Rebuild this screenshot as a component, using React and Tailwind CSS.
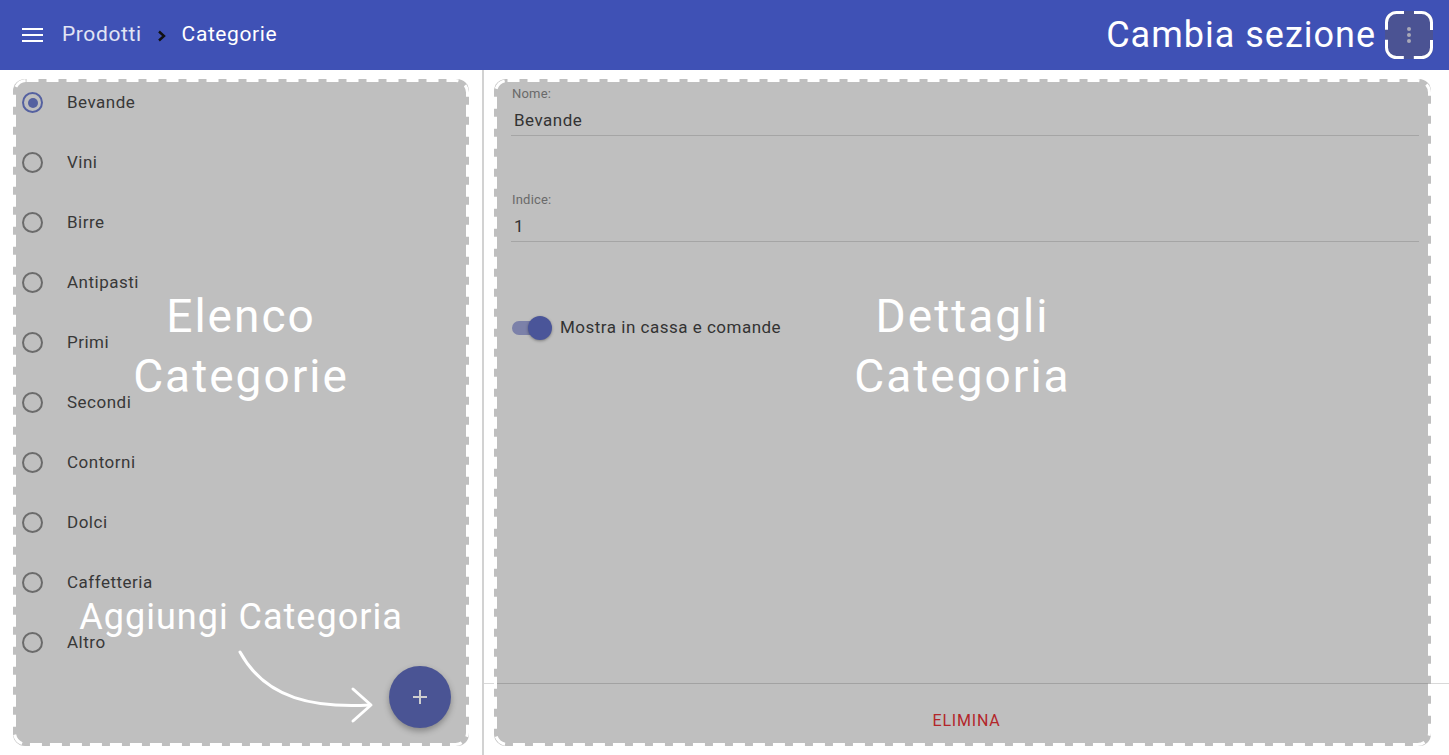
import React from 'react';

const categorie = ['Bevande', 'Vini', 'Birre', 'Antipasti', 'Primi', 'Secondi', 'Contorni', 'Dolci', 'Caffetteria', 'Altro'];

// dashed white outline drawn over the annotated areas
const DashedOutline = ({ radius = 12, dash = '12 8', offset = 0 }) => (
    <svg className="pointer-events-none absolute inset-0 h-full w-full overflow-visible">
        <rect
            x="1.5"
            y="1.5"
            rx={radius}
            ry={radius}
            className="h-[calc(100%-3px)] w-[calc(100%-3px)]"
            fill="none"
            stroke="#fff"
            strokeWidth="3"
            strokeDasharray={dash}
            strokeDashoffset={offset}
        />
    </svg>
);

const Radio = ({ checked }) => (
    <span
        className={
            'flex h-[21px] w-[21px] shrink-0 items-center justify-center rounded-full border-2 ' +
            (checked ? 'border-[#5561a0]' : 'border-[#6b6b6b]')
        }
    >
        {checked && <span className="h-[10px] w-[10px] rounded-full bg-[#5561a0]" />}
    </span>
);

const Header = () => (
    <header className="flex h-[70px] shrink-0 items-center bg-[#3f51b5] pl-[22px] pr-[16px] text-white">
        <svg width="21" height="16" viewBox="0 0 21 16" className="shrink-0">
            <rect x="0" y="1" width="21" height="2" fill="#fff" />
            <rect x="0" y="7" width="21" height="2" fill="#fff" />
            <rect x="0" y="13" width="21" height="2" fill="#fff" />
        </svg>
        <span className="ml-[19px] text-[21px] tracking-[0.6px] text-white/85">Prodotti</span>
        <svg width="10" height="12" viewBox="0 0 10 12" className="ml-[15px] mt-[2px]">
            <path d="M2 1.5 L7 6 L2 10.5" stroke="#111" strokeWidth="2.4" fill="none" />
        </svg>
        <span className="ml-[15px] text-[21px] tracking-[0.6px]">Categorie</span>
        <div className="ml-auto flex items-center">
            <span className="text-[36px] leading-none tracking-[1px]">Cambia sezione</span>
            <button className="relative ml-[9px] flex h-[48px] w-[48px] flex-col items-center justify-center gap-[2px] rounded-[11px] bg-[#4b5393]">
                <DashedOutline radius={10} dash="30.7 10" offset={23.2} />
                <span className="h-[4px] w-[4px] rounded-full bg-[#a9a9b8]" />
                <span className="h-[4px] w-[4px] rounded-full bg-[#a9a9b8]" />
                <span className="h-[4px] w-[4px] rounded-full bg-[#a9a9b8]" />
            </button>
        </div>
    </header>
);

const ElencoCategorie = () => (
    <div className="relative h-full rounded-[12px] bg-[#bfbfbf] p-[3px]">
        <ul>
            {categorie.map((nome, i) => (
                <li key={nome} className="flex h-[60px] items-start pl-[6px] pt-[10px]">
                    <Radio checked={i === 0} />
                    <span className="ml-[24px] text-[17px] leading-[20px] tracking-[0.5px] text-[#383838]">{nome}</span>
                </li>
            ))}
        </ul>

        <div className="absolute left-0 right-0 top-[207px] text-center text-[46px] leading-[60px] tracking-[2px] text-white">
            Elenco
            <br />
            Categorie
        </div>
        <div className="absolute left-0 right-0 top-[516px] text-center text-[36px] leading-[44px] tracking-[1px] text-white">
            Aggiungi Categoria
        </div>
        <svg className="absolute left-[213px] top-[563px]" width="160" height="90" viewBox="0 0 160 90">
            <path d="M14 10 C 40 58, 90 66, 144 63" stroke="#fff" strokeWidth="3" fill="none" strokeLinecap="round" />
            <path d="M127 47 L145 63 L127 79" stroke="#fff" strokeWidth="3" fill="none" strokeLinecap="round" strokeLinejoin="round" />
        </svg>
        <button className="absolute left-[376px] top-[587px] flex h-[62px] w-[62px] items-center justify-center rounded-full bg-[#4a5494] shadow-[0_3px_6px_rgba(0,0,0,0.3)]">
            <svg width="16" height="16" viewBox="0 0 16 16">
                <path d="M8 1 V15 M1 8 H15" stroke="#cfcfcf" strokeWidth="2" />
            </svg>
        </button>
        <DashedOutline />
    </div>
);

const Campo = ({ label, value, className }) => (
    <div className={className}>
        <div className="pl-[1px] text-[13px] leading-[16px] tracking-[0.2px] text-[#6a6a6a]">{label}</div>
        <div className="border-b border-[#a5a5a5] pb-[3px] pl-[3px] pt-[6px] text-[17px] leading-[24px] tracking-[0.5px] text-[#333]">
            {value}
        </div>
    </div>
);

const DettagliCategoria = () => (
    <div className="relative flex h-full flex-col rounded-[12px] bg-[#bfbfbf] p-[3px]">
        <div className="flex-1 pl-[14px] pr-[9px] pt-[4px]">
            <Campo label="Nome:" value="Bevande" />
            <Campo label="Indice:" value="1" className="mt-[56px]" />
            <div className="mt-[74px] flex h-[24px] items-center">
                <div className="relative ml-[1px] h-[24px] w-[40px]">
                    <div className="absolute left-0 top-[5px] h-[14px] w-[36px] rounded-full bg-[#7c81a9]" />
                    <div className="absolute left-[16px] top-0 h-[24px] w-[24px] rounded-full bg-[#4a5599] shadow-[0_1px_3px_rgba(0,0,0,0.35)]" />
                </div>
                <span className="ml-[8px] text-[17px] tracking-[0.5px] text-[#333]">Mostra in cassa e comande</span>
            </div>
        </div>
        <div className="-ml-[13px] -mr-[21px] border-t border-black/15 pb-[12px] pt-[27px] text-center text-[16px] leading-[20px] tracking-[0.8px] text-[#b3262a]">
            ELIMINA
        </div>

        <div className="pointer-events-none absolute left-0 right-0 top-[207px] text-center text-[46px] leading-[60px] tracking-[2px] text-white">
            Dettagli
            <br />
            Categoria
        </div>
        <DashedOutline />
    </div>
);

const App = () => {
    return (
        <div className="flex h-[755px] w-[1449px] flex-col overflow-hidden bg-white font-['Roboto',sans-serif]">
            <Header />
            <div className="flex min-h-0 flex-1">
                <div className="w-[484px] shrink-0 border-r-2 border-[#d2d2d2] px-[13px] py-[9px]">
                    <ElencoCategorie />
                </div>
                <div className="flex-1 pb-[9px] pl-[10px] pr-[18px] pt-[9px]">
                    <DettagliCategoria />
                </div>
            </div>
        </div>
    );
};

export default App;
